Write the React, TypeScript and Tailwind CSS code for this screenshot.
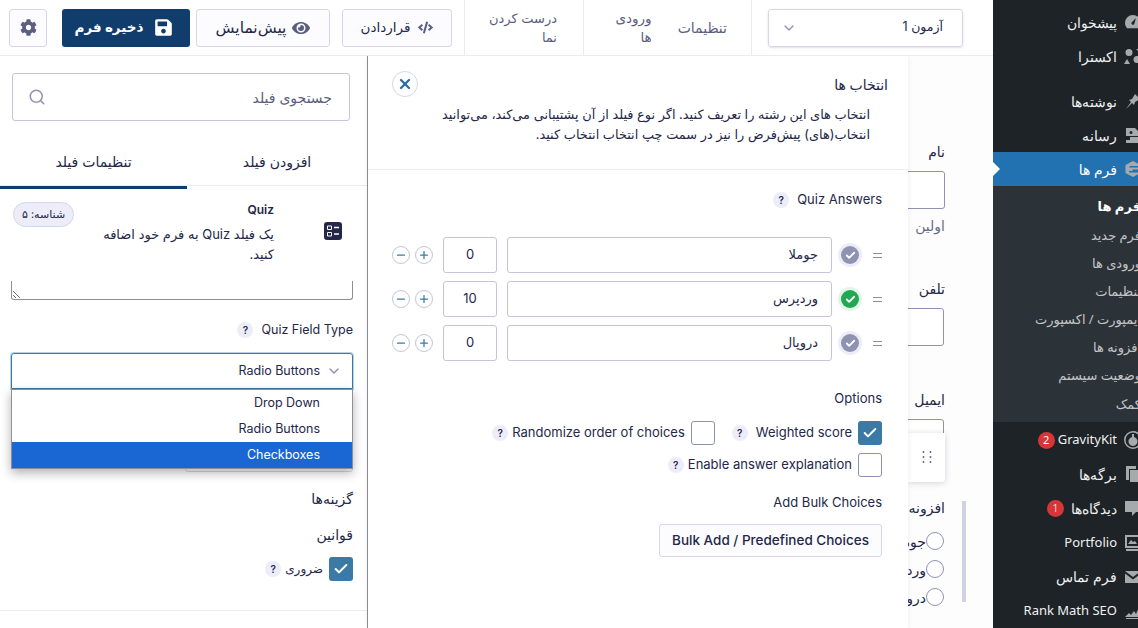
import { ChevronDown, Search, X, Check, Plus, Minus } from "lucide-react";
import { FaCode, FaCog, FaEye, FaSave } from "react-icons/fa";

const sub = ["فرم ها", "فرم جدید", "ورودی ها", "تنظیمات", "ایمپورت / اکسپورت", "افزونه ها", "وضعیت سیستم", "کمک"];

function Help() {
  return (
    <span className="flex h-4 w-4 shrink-0 items-center justify-center rounded-full bg-[#ecedf8] text-[10px] font-semibold text-[#242748]">
      ?
    </span>
  );
}

function MenuIcon({ name }: { name: string }) {
  // admin menu glyphs, the right part is cut by the window edge anyway
  const paths: Record<string, React.ReactNode> = {
    dash: <path d="M10 3a8 8 0 0 0-8 8c0 2 .8 3.9 2 5.2h12A8 8 0 0 0 10 3zm1 9.5a1.6 1.6 0 0 1-2.4-1.9L13 6z" />,
    extra: <path d="M6 3a3.5 3.5 0 1 1 0 7 3.5 3.5 0 0 1 0-7zm8 7a3.5 3.5 0 1 1 0 7 3.5 3.5 0 0 1 0-7zM4 13l3 5H1zM13 3h5v5z" />,
    pin: <path d="M3 18l5-7-2-2 3-1 3-5 5 5-5 3-1 3-2-2z" />,
    media: <path d="M3 3h9l3 3v5H3zm4 9h9v6H3v-3h4zm1-6a1.5 1.5 0 1 0 0 3 1.5 1.5 0 0 0 0-3z" />,
    gf: <path fillRule="evenodd" d="M10 2l7.5 4v8L10 18l-7.5-4V6zM6 8.500h9V7H7zm0 3.500v1.500h9v-3H9.500V12z" />,
    gk: <path fillRule="evenodd" d="M10 1a9 9 0 1 1 0 18 9 9 0 0 1 0-18zm0 1.500a7.500 7.500 0 1 0 0 15 7.500 7.500 0 0 0 0-15zM9 4h2v3a4.500 4.500 0 1 1-2 0z" />,
    pages: <path d="M3 2h10v3H6v11H3zm4 4h10v12H7z" />,
    comment: <path d="M2 3h16v11h-5l-4 4v-4H2z" />,
    portfolio: <path fillRule="evenodd" d="M2 2h15v13H2zm2 2v9h11V4zm1 7l3-4 2 2 2-1 2 3zM3 16h15V5h1v13H3z" />,
    mail: <path d="M2 4h16L10 10zm0 2.500l8 6 8-6V16H2z" />,
    rm: <path d="M2 16l4-4 2 2 3-4 2 3 3-7v10zM3 17h14v1H3z" />,
  };
  return (
    <svg viewBox="0 0 20 20" className="h-5 w-5 shrink-0 fill-[#a7aaad]">
      {paths[name]}
    </svg>
  );
}

function MenuItem({ icon, label, badge, latin }: { icon: string; label: string; badge?: string; latin?: boolean }) {
  return (
    <div className={`flex h-[34.2px] items-center gap-[6px] pr-[10px] text-[#f0f0f1] ${latin ? "text-[13px]" : "text-[14px] font-light"}`}>
      <MenuIcon name={icon} />
      <span className="whitespace-nowrap">{label}</span>
      {badge && (
        <span className={`flex h-[17px] w-[17px] items-center justify-center rounded-full bg-[#d63638] text-[11px] text-white ${latin ? "mr-[-3px]" : "mr-[1px]"}`}>{badge}</span>
      )}
    </div>
  );
}

function Sidebar() {
  return (
    <aside className="h-[628px] w-[145px] shrink-0 overflow-hidden bg-[#1d2327] font-['Noto_Sans','DejaVu_Sans',sans-serif]">
      <div className="mr-[-15px] w-[160px] pt-[5px]">
        <div className="h-[34px]"><MenuItem icon="dash" label="پیشخوان" /></div>
        <div className="h-[34px]"><MenuItem icon="extra" label="اکسترا" /></div>
        <div className="h-[11px]" />
        <div className="h-[34px]"><MenuItem icon="pin" label="نوشته‌ها" /></div>
        <div className="h-[34px]"><MenuItem icon="media" label="رسانه" /></div>
        <div className="relative flex h-[34px] items-center gap-[6px] bg-[#2271b1] pr-[10px] text-[14px] text-white">
          <MenuIcon name="gf" />
          <span>فرم ها</span>
          <span className="absolute left-0 top-[10px] h-0 w-0 border-y-[7px] border-l-[7px] border-y-transparent border-l-white" />
        </div>
        <div className="mb-[1px] h-[236px] bg-[#2c3338] pt-[7px]">
          {sub.map((s, i) => (
            <div
              key={s}
              className={`flex h-[28.2px] items-center whitespace-nowrap pr-[12px] text-[13px] ${i === 0 ? "font-bold text-white" : "text-[#c3c4c7]"}`}
            >
              {s}
            </div>
          ))}
        </div>
        <MenuItem icon="gk" label="GravityKit" badge="2" latin />
        <MenuItem icon="pages" label="برگه‌ها" />
        <MenuItem icon="comment" label="دیدگاه‌ها" badge="1" />
        <MenuItem icon="portfolio" label="Portfolio" latin />
        <MenuItem icon="mail" label="فرم تماس" />
        <MenuItem icon="rm" label="Rank Math SEO" latin />
      </div>
    </aside>
  );
}

function TopBar() {
  return (
    <header className="flex h-[56px] shrink-0 items-stretch border-b border-[#ebebf2] bg-white text-[13.500px] text-[#242748]">
      <div className="flex w-[242px] items-center border-l border-[#ebebf2] pl-[16px] pr-[30px]">
        <div className="flex h-[38px] w-[196px] items-center justify-between rounded-[3px] border border-[#d5d7e9] pl-[12px] pr-[19px] text-[12.500px] shadow-sm">
          <span>آزمون 1</span>
          <ChevronDown className="h-4 w-4 text-[#9092b2]" />
        </div>
      </div>
      <div className="flex w-[168px] items-center gap-[26px] border-l border-[#ebebf2] pr-[24px] text-[#5b5e80]">
        <span className="text-[14px]">تنظیمات</span>
        <span className="leading-[19px]">
          ورودی
          <br />
          ها
        </span>
      </div>
      <div className="flex w-[119px] items-center border-l border-[#ebebf2] pr-[26px] text-[13px] leading-[19px] text-[#5b5e80]">
        <span>
          درست کردن
          <br />
          نما
        </span>
      </div>
      <div className="flex items-center pr-[12px]">
        <button className="flex h-[38px] w-[110px] items-center justify-center gap-[8px] rounded-[3px] border border-[#d5d7e9] bg-[#fcfcfe] text-[13.500px]">
          <FaCode className="h-[15px] w-[15px] text-[#5b5e80]" />
          <span>قراردادن</span>
        </button>
        <button className="mr-[12px] flex h-[38px] w-[134px] items-center justify-center gap-[6px] rounded-[3px] border border-[#d5d7e9] bg-[#fcfcfe] text-[15.500px]">
          <FaEye className="h-[18px] w-[18px] text-[#5b5e80]" />
          <span>پیش‌نمایش</span>
        </button>
        <button className="mr-[6px] flex h-[38px] w-[128px] items-center justify-center gap-[11px] rounded-[3px] bg-[#103d6b] pr-[4px] text-[13.500px] font-bold text-white">
          <FaSave className="h-[19px] w-[19px] text-white" />
          <span>ذخیره فرم</span>
        </button>
        <button className="mr-[15px] flex h-[38px] w-[38px] items-center justify-center rounded-[3px] border border-[#d5d7e9] bg-[#fcfcfe]">
          <FaCog className="h-[17px] w-[17px] text-[#5b5e80]" />
        </button>
      </div>
    </header>
  );
}

function CheckBox({ checked }: { checked?: boolean }) {
  return checked ? (
    <span className="flex h-6 w-6 shrink-0 items-center justify-center rounded-[3px] bg-[#3a7aa5]">
      <Check className="h-4 w-4 text-white" strokeWidth={3} />
    </span>
  ) : (
    <span className="block h-6 w-6 shrink-0 rounded-[3px] border border-[#9092b2] bg-white" />
  );
}

function ChoiceRow({ label, score, on }: { label: string; score: string; on?: boolean }) {
  return (
    <div className="flex h-[36px] items-center">
      <span className="flex w-[10px] shrink-0 flex-col gap-[3px]">
        <span className="h-px w-[9px] bg-[#8a8ca8]" />
        <span className="h-px w-[9px] bg-[#8a8ca8]" />
      </span>
      <span className={`mr-[10px] flex h-6 w-6 shrink-0 items-center justify-center rounded-full ${on ? "bg-[#e2f5e9]" : "bg-[#ecedf8]"}`}>
        <span className={`flex h-[18px] w-[18px] items-center justify-center rounded-full ${on ? "bg-[#22a753]" : "bg-[#9092b2]"}`}>
          <Check className="h-[11px] w-[11px] text-white" strokeWidth={4} />
        </span>
      </span>
      <div className="mr-[6px] flex h-[36px] w-[325px] shrink-0 items-center rounded-[3px] border border-[#c4c5d8] pr-[13px] text-[13px] text-[#242748]">
        {label}
      </div>
      <div className="mr-[10px] flex h-[36px] w-[54px] shrink-0 items-center justify-center rounded-[3px] border border-[#c4c5d8] font-['Inter',sans-serif] text-[13px] text-[#242748]">
        {score}
      </div>
      <span className="mr-[10px] flex h-[18px] w-[18px] shrink-0 items-center justify-center rounded-full border border-[#c4c5d8]">
        <Plus className="h-3 w-3 text-[#3a7aa5]" strokeWidth={2.5} />
      </span>
      <span className="mr-[5px] flex h-[18px] w-[18px] shrink-0 items-center justify-center rounded-full border border-[#c4c5d8]">
        <Minus className="h-3 w-3 text-[#3a7aa5]" strokeWidth={2.5} />
      </span>
    </div>
  );
}

function Flyout() {
  return (
    <section className="z-10 w-[540px] shrink-0 bg-white text-[#242748] shadow-[0_0_6px_rgba(36,39,72,0.08)]">
      <div className="h-[114px] border-b border-[#ebebf2] pr-[20px] pt-[15px]">
        <div className="flex items-center justify-between pl-[24px]">
          <span className="text-[14px] font-medium">انتخاب ها</span>
          <span className="flex h-[26px] w-[26px] items-center justify-center rounded-full border border-[#d5d7e9]">
            <X className="h-4 w-4 text-[#2f6f9f]" strokeWidth={3.5} />
          </span>
        </div>
        <p className="mt-[8px] pr-[18px] text-[12.900px] leading-[20px] text-[#242748]">
          انتخاب های این رشته را تعریف کنید. اگر نوع فیلد از آن پشتیبانی می‌کند، می‌توانید
          <br />
          انتخاب(های) پیش‌فرض را نیز در سمت چپ انتخاب انتخاب کنید.
        </p>
      </div>
      <div className="pl-[24px] pr-[26px] pt-[21px]">
        <div className="flex h-[18px] items-center gap-[8px] font-['Inter',sans-serif] text-[13px]">
          <span dir="ltr">Quiz Answers</span>
          <Help />
        </div>
        <div className="mt-[28px] flex flex-col gap-[8px]">
          <ChoiceRow label="جوملا" score="0" />
          <ChoiceRow label="وردپرس" score="10" on />
          <ChoiceRow label="دروپال" score="0" />
        </div>
        <div className="mt-[28px] font-['Inter',sans-serif] text-[13px]">
          <div className="h-[18px] leading-[18px]">Options</div>
          <div className="mt-[14px] flex h-6 items-center">
            <CheckBox checked />
            <span className="mr-[6px]" dir="ltr">Weighted score</span>
            <span className="mr-[8px]"><Help /></span>
            <span className="mr-[17px]"><CheckBox /></span>
            <span className="mr-[6px]" dir="ltr">Randomize order of choices</span>
            <span className="mr-[4px]"><Help /></span>
          </div>
          <div className="mt-[8px] flex h-6 items-center">
            <CheckBox />
            <span className="mr-[6px]" dir="ltr">Enable answer explanation</span>
            <span className="mr-[4px]"><Help /></span>
          </div>
          <div className="mt-[16px] h-[18px] leading-[18px]">Add Bulk Choices</div>
          <button className="mt-[13px] flex h-[33px] w-[223px] items-center justify-center rounded-[3px] border border-[#d5d7e9] bg-[#fcfcfe] text-[13.500px] font-medium" dir="ltr">
            Bulk Add / Predefined Choices
          </button>
        </div>
      </div>
    </section>
  );
}

function LeftPanel() {
  return (
    <section className="flex w-[368px] shrink-0 flex-col border-r border-[#8c8f94] bg-white text-[#242748]">
      <div className="pr-[17px] pt-[17px]">
        <div className="flex h-[48px] w-[338px] items-center justify-between rounded-[3px] border border-[#c4c5d8] pl-[15px] pr-[17px] text-[14px] text-[#5b5e80]">
          <span>جستجوی فیلد</span>
          <Search className="h-[18px] w-[18px] text-[#9092b2]" />
        </div>
      </div>
      <div className="mt-[20px] flex h-[45px] shrink-0 border-b border-[#ebebf2] text-[14px]">
        <div className="flex w-[180px] items-center justify-center pb-[3px]">افزودن فیلد</div>
        <div className="relative flex w-[187px] items-center justify-center pb-[3px]">
          تنظیمات فیلد
          <span className="absolute bottom-[-4px] left-0 right-0 h-[3px] bg-[#103d6b]" />
        </div>
      </div>
      <div className="flex h-[95px] shrink-0 pr-[25px] pt-[14px]">
        <div className="flex h-[62px] w-[18px] shrink-0 items-center">
          <svg viewBox="0 0 18 18" className="h-[18px] w-[18px]">
            <rect width="18" height="18" rx="3" fill="#242748" />
            <path d="M3.500 4h4v3.500h-4zM3.500 10.500h4V14h-4z" fill="none" stroke="#fff" strokeWidth="1" />
            <path d="M10 5.500h5M10 12h5" stroke="#fff" strokeWidth="1.500" />
          </svg>
        </div>
        <div className="mr-[50px] w-[180px] shrink-0">
          <div className="mb-[4px] font-['Inter',sans-serif] text-[12px] font-semibold leading-[20px]">Quiz</div>
          <p className="text-[13px] leading-[20px]">یک فیلد Quiz به فرم خود اضافه کنید.</p>
        </div>
        <div className="mr-[20px] mt-[2px] flex h-[25px] w-[61px] shrink-0 items-center justify-center rounded-full border border-[#d5d7e9] bg-[#ecedf8] text-[11px]">
          شناسه: ۵
        </div>
      </div>
      <div className="relative flex-1 pl-[11px] pr-[14px]">
        <div className="relative h-[19px] rounded-b-[3px] border-x border-b border-[#8c8f94]">
          <svg viewBox="0 0 10 10" className="absolute bottom-0 left-0 h-[10px] w-[10px] stroke-[#777]">
            <path d="M1 2l7 7M1 6l3 3" />
          </svg>
        </div>
        <div className="mt-[21px] flex h-[18px] items-center gap-[8px] font-['Inter',sans-serif] text-[12.500px]">
          <span dir="ltr">Quiz Field Type</span>
          <Help />
        </div>
        <div className="relative mt-[14px] h-[36px] rounded-t-[3px] border border-[#3a7aa5] shadow-[0_0_0_1px_#b5d3e8]">
          <div className="flex h-full items-center gap-[6px] pr-[10px] font-['Inter',sans-serif] text-[12.500px]">
            <ChevronDown className="h-4 w-4 text-[#8a8ca8]" />
            <span dir="ltr">Radio Buttons</span>
          </div>
          <div className="absolute left-[-1px] right-[-1px] top-[35px] z-20 h-[80px] border border-[#8c8f94] bg-white pt-[1px] font-['Inter',sans-serif] text-[12.500px] shadow-[0_4px_10px_rgba(0,0,0,0.3)]">
            <div className="flex h-[25px] items-center pr-[32px]"><span dir="ltr">Drop Down</span></div>
            <div className="flex h-[26px] items-center pr-[32px]"><span dir="ltr">Radio Buttons</span></div>
            <div className="flex h-[26px] items-center bg-[#1a66d2] pr-[32px] text-white"><span dir="ltr">Checkboxes</span></div>
          </div>
        </div>
        <div className="h-[83px] w-[168px] rounded-b-[3px] border border-[#d5d7e9]" />
        <div className="mt-[17px] text-[14px] leading-[20px]">گزینه‌ها</div>
        <div className="mt-[16px] text-[14px] leading-[20px]">قوانین</div>
        <div className="mt-[12px] flex h-6 items-center">
          <CheckBox checked />
          <span className="mr-[6px] text-[12px]">ضروری</span>
          <span className="mr-[4px]"><Help /></span>
        </div>
        <div className="absolute bottom-[17px] left-0 right-0 h-px bg-[#ebebf2]" />
      </div>
    </section>
  );
}

function FormColumn() {
  return (
    <div className="relative w-[85px] shrink-0 overflow-hidden bg-[#fdfdfe] pr-[48px] text-[14px] text-[#242748]">
      <div className="w-[300px] pt-[86px]">
        <div className="font-medium leading-[20px]">نام</div>
        <div className="mt-[9px] h-[38px] rounded-[3px] border border-[#9092b2] bg-white" />
        <div className="mt-[7px] leading-[20px] text-[#6b6d85]">اولین</div>
        <div className="mt-[43px] font-medium leading-[20px]">تلفن</div>
        <div className="mr-[1px] mt-[9px] h-[38px] rounded-[3px] border border-[#9092b2] bg-white" />
        <div className="mt-[44px] font-medium leading-[20px]">ایمیل</div>
        <div className="mr-[1px] mt-[9px] h-[38px] rounded-[3px] border border-[#9092b2] bg-white" />
        <div className="mt-[41px] font-medium leading-[20px]">افزونه</div>
        <div className="mt-[14px] flex flex-col gap-[10px] pr-[1px]">
          {["جوملا", "وردپرس", "دروپال"].map((c) => (
            <div key={c} className="flex h-[18px] items-center">
              <span className="h-[18px] w-[18px] shrink-0 rounded-full border border-[#9092b2] bg-white" />
              <span>{c}</span>
            </div>
          ))}
        </div>
      </div>
      <div className="absolute left-0 top-[377px] flex h-[49px] w-[37px] items-center justify-center rounded-br-[3px] bg-white shadow-[0_1px_6px_rgba(36,39,72,0.2)]">
        <svg viewBox="0 0 10 16" className="h-4 w-[10px] fill-[#5b5e80]">
          {[1, 6, 11].map((y) => (
            <g key={y}>
              <circle cx="1.500" cy={y + 1} r="0.900" />
              <circle cx="8.500" cy={y + 1} r="0.900" />
            </g>
          ))}
        </svg>
      </div>
      <div className="absolute right-[27px] top-[445px] h-[101px] w-1 bg-[#d0d1e4]" />
    </div>
  );
}

export default function App() {
  return (
    <div dir="rtl" className="flex h-[628px] w-[1138px] overflow-hidden bg-white font-['Inter','Noto_Sans','DejaVu_Sans',sans-serif]">
      <Sidebar />
      <main className="flex min-w-0 flex-1 flex-col">
        <TopBar />
        <div className="flex min-h-0 flex-1 overflow-hidden">
          <FormColumn />
          <Flyout />
          <LeftPanel />
        </div>
      </main>
    </div>
  );
}
